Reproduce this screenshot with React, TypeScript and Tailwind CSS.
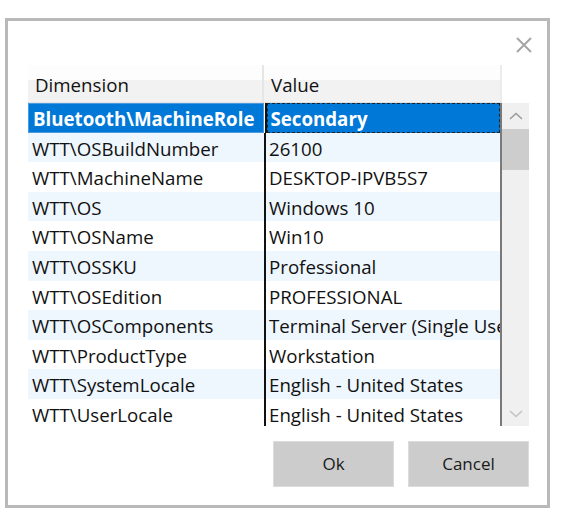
const rows: [string, string][] = [
  ["Bluetooth\\MachineRole", "Secondary"],
  ["WTT\\OSBuildNumber", "26100"],
  ["WTT\\MachineName", "DESKTOP-IPVB5S7"],
  ["WTT\\OS", "Windows 10"],
  ["WTT\\OSName", "Win10"],
  ["WTT\\OSSKU", "Professional"],
  ["WTT\\OSEdition", "PROFESSIONAL"],
  ["WTT\\OSComponents", "Terminal Server (Single User)"],
  ["WTT\\ProductType", "Workstation"],
  ["WTT\\SystemLocale", "English - United States"],
  ["WTT\\UserLocale", "English - United States"],
];

const Chevron = ({ up, color }: { up: boolean; color: string }) => (
  <svg width="14" height="8" viewBox="0 0 14 8">
    <path
      d={up ? "M1 7 L7 1.5 L13 7" : "M1 1 L7 6.5 L13 1"}
      fill="none"
      stroke={color}
      strokeWidth="1.5"
    />
  </svg>
);

const App = () => {
  return (
    <div className="w-[580px] h-[528px] bg-white font-['Open_Sans',sans-serif] text-[#111]">
      <div className="absolute left-[5px] top-[18px] w-[545px] h-[490px] border-[3px] border-[#b9b9b9] flex flex-col pl-[20px] pr-[18px]">
        {/* title bar with close */}
        <div className="h-[44px] flex justify-end pt-[16px]">
          <svg width="16" height="16" viewBox="0 0 16 16" className="mr-[-3px]">
            <path d="M1 1 L15 15 M15 1 L1 15" stroke="#a6a6a6" strokeWidth="2" />
          </svg>
        </div>

        {/* grid */}
        <div className="flex">
          <div className="w-[474px]">
            <div className="h-[38px] flex text-[18.7px] bg-[linear-gradient(#fdfdfd_0%,#fdfdfd_40%,#f2f2f2_40%,#f2f2f2_100%)] border-b border-[#e2e2e2]">
              <div className="w-[236px] pl-[7px] pt-[6px] border-r-2 border-[#e6e6e6]">Dimension</div>
              <div className="flex-1 pl-[7px] pt-[6px] border-r-2 border-[#ececec]">Value</div>
            </div>
            <div className="h-[323px] overflow-hidden text-[18.7px]">
              {rows.map(([dim, val], i) => {
                const selected = i === 0;
                const alt = i % 2 === 1;
                return (
                  <div
                    key={dim}
                    className={`h-[29.6px] flex leading-[32px] whitespace-nowrap ${alt ? "bg-[#eef6fe]" : "bg-white"}`}
                  >
                    <div
                      className={`w-[236px] pl-[4px] ${
                        selected ? "bg-[#0078d7] text-white font-bold border border-[#4c9be0] pl-[3px] leading-[30px] mr-[1px]" : ""
                      }`}
                    >
                      {dim}
                    </div>
                    <div className="w-[238px] border-l-2 border-[#111] border-r-2 border-r-[#7a7a7a] overflow-hidden">
                      <div
                        className={`h-full pl-[3px] ${
                          selected ? "bg-[#0078d7] text-white font-bold border border-dashed border-[#222] pl-[2px] leading-[30px]" : ""
                        }`}
                      >
                        {val}
                      </div>
                    </div>
                  </div>
                );
              })}
            </div>
          </div>
          {/* scrollbar */}
          <div className="w-[27px] flex flex-col">
            <div className="h-[38px]" />
            <div className="h-[323px] bg-[#f0f0f0] flex flex-col">
              <div className="h-[26px] flex items-center justify-center">
                <Chevron up color="#9a9a9a" />
              </div>
              <div className="h-[41px] bg-[#cdcdcd]" />
              <div className="flex-1" />
              <div className="h-[24px] flex items-center justify-center">
                <Chevron up={false} color="#c2c2c2" />
              </div>
            </div>
          </div>
        </div>

        {/* buttons */}
        <div className="mt-[15px] flex justify-end gap-[14px] text-[17px]">
          <button className="w-[121px] h-[46px] bg-[#cccccc] border border-[#dcdcdc] text-[#1a1a1a]">Ok</button>
          <button className="w-[121px] h-[46px] bg-[#cccccc] border border-[#dcdcdc] text-[#1a1a1a]">Cancel</button>
        </div>
      </div>
    </div>
  );
};

export default App;
